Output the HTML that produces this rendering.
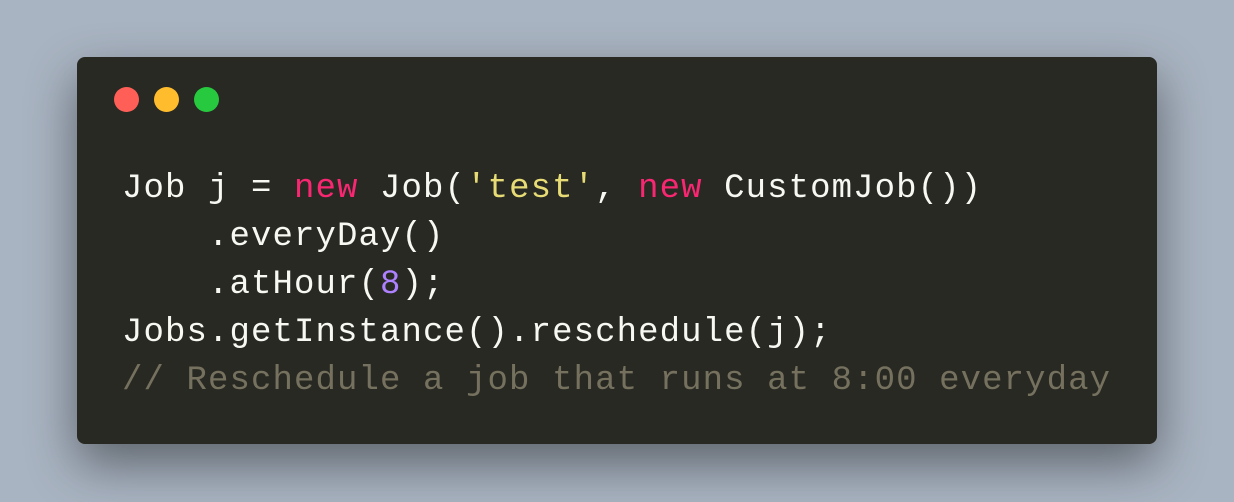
<!DOCTYPE html>
<html><head><style>
html,body{margin:0;padding:0;}
body{width:1234px;height:502px;background:#a9b4c2;position:relative;overflow:hidden;}
.win{position:absolute;left:77px;top:57px;width:1080px;height:387px;background:#282923;border-radius:8px;box-shadow:0 20px 50px rgba(0,0,0,0.45);}
.dot{position:absolute;top:30px;width:25px;height:25px;border-radius:50%;}
pre{position:absolute;left:45px;top:108px;margin:0;font-family:"Liberation Mono",monospace;font-size:34px;letter-spacing:1.1px;line-height:48px;color:#f8f8f2;}
.k{color:#f92672}.s{color:#e6db74}.n{color:#ae81ff}.c{color:#75715e}
</style></head><body>
<div class="win">
<div class="dot" style="left:37px;background:#ff5f56"></div>
<div class="dot" style="left:77px;background:#ffbd2e"></div>
<div class="dot" style="left:117px;background:#27c93f"></div>
<pre>Job j = <span class="k">new</span> Job(<span class="s">'test'</span>, <span class="k">new</span> CustomJob())
    .everyDay()
    .atHour(<span class="n">8</span>);
Jobs.getInstance().reschedule(j);
<span class="c">// Reschedule a job that runs at 8:00 everyday</span></pre>
</div>
</body></html>
